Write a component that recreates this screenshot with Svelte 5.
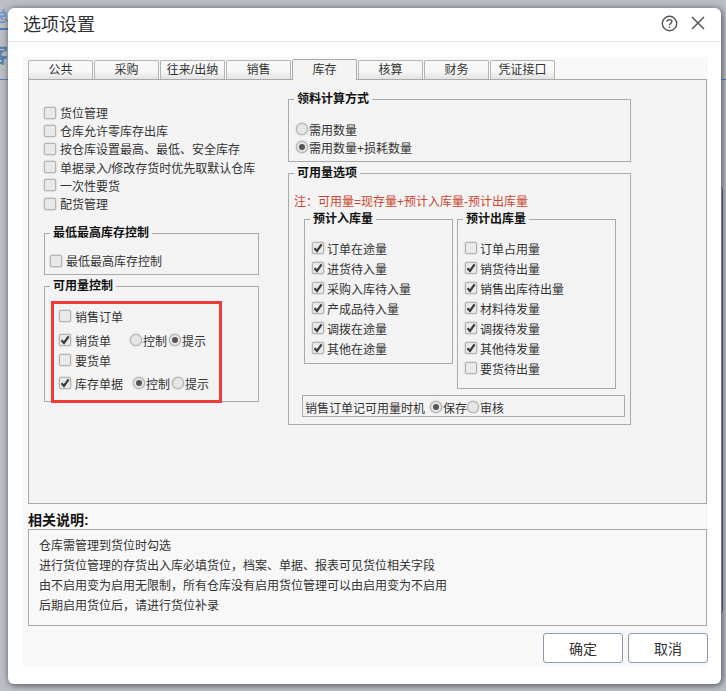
<script>
  const general = [
    { label: '货位管理' },
    { label: '仓库允许零库存出库' },
    { label: '按仓库设置最高、最低、安全库存' },
    { label: '单据录入/修改存货时优先取默认仓库' },
    { label: '一次性要货' },
    { label: '配货管理' }
  ];
  const tabs = ['公共', '采购', '往来/出纳', '销售', '库存', '核算', '财务', '凭证接口'];
  const incoming = ['订单在途量', '进货待入量', '采购入库待入量', '产成品待入量', '调拨在途量', '其他在途量'];
  const outgoing = [
    { label: '订单占用量', on: false },
    { label: '销货待出量', on: true },
    { label: '销售出库待出量', on: true },
    { label: '材料待发量', on: true },
    { label: '调拨待发量', on: true },
    { label: '其他待发量', on: true },
    { label: '要货待出量', on: false }
  ];
  const notes = [
    '仓库需管理到货位时勾选',
    '进行货位管理的存货出入库必填货位，档案、单据、报表可见货位相关字段',
    '由不启用变为启用无限制，所有仓库没有启用货位管理可以由启用变为不启用',
    '后期启用货位后，请进行货位补录'
  ];
</script>

{#snippet check(on)}
  <span class="check">
    {#if on}
      <svg width="10" height="10" viewBox="0 0 10 10"><path d="M1.5 5.2 L4 8 L8.6 1.4" fill="none" stroke="#3a3a3a" stroke-width="2.2" /></svg>
    {/if}
  </span>
{/snippet}

{#snippet radio(on)}
  <span class="radio">{#if on}<span class="dot"></span>{/if}</span>
{/snippet}

<div class="backdrop">
  <span class="bg-glyph one">总</span>
  <span class="bg-line one"></span>
  <span class="bg-glyph two">客</span>
  <span class="bg-line two"></span>
  <span class="bg-line three"></span>
  <span class="bg-curve"></span>

  <div class="dialog">
    <header class="title-bar">
      <h1>选项设置</h1>
      <div class="title-icons">
        <svg width="17" height="17" viewBox="0 0 17 17" fill="none" stroke="#555" stroke-width="1.4">
          <circle cx="8.5" cy="8.5" r="7.2" />
          <path d="M6.1 6.8 C6.1 3.9 10.9 3.9 10.9 6.6 C10.9 8.4 8.5 8.3 8.5 10.3" />
          <path d="M8.5 11.6 V13" />
        </svg>
        <svg width="14" height="14" viewBox="0 0 14 14" fill="none" stroke="#555" stroke-width="1.5">
          <path d="M1 1 L13 13 M13 1 L1 13" />
        </svg>
      </div>
    </header>

    <div class="body">
      <div class="tabs">
        {#each tabs as tab}
          <span class="tab" class:active={tab === '库存'}>{tab}</span>
        {/each}
      </div>

      <div class="panel">
        <div class="col-left">
          <div class="general">
            {#each general as item}
              <label class="row">{@render check(false)}{item.label}</label>
            {/each}
          </div>

          <fieldset class="minmax">
            <legend>最低最高库存控制</legend>
            <label class="row">{@render check(false)}最低最高库存控制</label>
          </fieldset>

          <fieldset class="avail-control">
            <legend>可用量控制</legend>
            <div class="highlight">
              <div class="hl-row r1"><label class="row">{@render check(false)}销售订单</label></div>
              <div class="hl-row r2">
                <label class="row doc">{@render check(true)}销货单</label>
                <span class="choice">{@render radio(false)}控制</span>
                <span class="choice">{@render radio(true)}提示</span>
              </div>
              <div class="hl-row r3"><label class="row">{@render check(false)}要货单</label></div>
              <div class="hl-row r4">
                <label class="row doc tight">{@render check(true)}库存单据</label>
                <span class="choice">{@render radio(true)}控制</span>
                <span class="choice">{@render radio(false)}提示</span>
              </div>
            </div>
          </fieldset>
        </div>

        <div class="col-right">
          <fieldset class="material">
            <legend>领料计算方式</legend>
            <div class="choice line">{@render radio(false)}需用数量</div>
            <div class="choice line">{@render radio(true)}需用数量+损耗数量</div>
          </fieldset>

          <fieldset class="avail-options">
            <legend>可用量选项</legend>
            <p class="formula">注：可用量=现存量+预计入库量-预计出库量</p>
            <div class="qty-groups">
              <fieldset class="qty in">
                <legend>预计入库量</legend>
                {#each incoming as item}
                  <label class="row qty-row">{@render check(true)}{item}</label>
                {/each}
              </fieldset>
              <fieldset class="qty out">
                <legend>预计出库量</legend>
                {#each outgoing as item}
                  <label class="row qty-row">{@render check(item.on)}{item.label}</label>
                {/each}
              </fieldset>
            </div>
            <div class="timing">
              销售订单记可用量时机
              <span class="choice first">{@render radio(true)}保存</span>
              <span class="choice">{@render radio(false)}审核</span>
            </div>
          </fieldset>
        </div>
      </div>

      <div class="notes-title">相关说明:</div>
      <div class="notes">
        {#each notes as line}
          <div>{line}</div>
        {/each}
      </div>

      <div class="actions">
        <button>确定</button>
        <button>取消</button>
      </div>
    </div>
  </div>
</div>

<style>
  :global(body) {
    margin: 0;
    font-family: "Liberation Sans", "Noto Sans CJK SC", sans-serif;
  }

  .backdrop {
    position: relative;
    width: 726px;
    height: 691px;
    overflow: hidden;
    background: #bcbfc6;
    padding: 8px 5px 7px 8px;
    box-sizing: border-box;
  }

  .bg-glyph {
    position: absolute;
    color: #6d95c9;
    font-weight: 700;
  }
  .bg-glyph.one { left: -6px; top: 9px; font-size: 14px; line-height: 14px; }
  .bg-glyph.two { left: -12px; top: 46px; font-size: 20px; line-height: 20px; color: #5b7fb0; }

  .bg-line {
    position: absolute;
    height: 1px;
    background: #4a7fc4;
  }
  .bg-line.one { left: 0; top: 28px; width: 8px; height: 2px; }
  .bg-line.two { left: 0; top: 79px; width: 8px; }
  .bg-line.three { left: 721px; top: 79px; width: 5px; }

  /* edge of the page behind the dialog */
  .bg-curve {
    position: absolute;
    left: 712px;
    top: 185px;
    width: 11px;
    height: 430px;
    box-sizing: border-box;
    border-right: 1px solid #3f68a8;
    border-radius: 0 6px 6px 0;
  }

  .dialog {
    position: relative;
    width: 713px;
    height: 676px;
    box-sizing: border-box;
    background: #fff;
    border-radius: 6px;
    box-shadow: 1px 1px 7px rgba(40, 40, 50, 0.8);
    display: flex;
    flex-direction: column;
  }

  .title-bar {
    height: 34px;
    flex: none;
    box-sizing: border-box;
    border-bottom: 1px solid #e4e4e4;
    display: flex;
    align-items: center;
    justify-content: space-between;
    padding: 0 16px 3px 15px;
  }

  h1 {
    margin: 0;
    font-size: 18px;
    font-weight: 400;
    color: #333;
  }

  .title-icons {
    display: flex;
    align-items: center;
    gap: 13px;
  }

  .body {
    margin: 15px 13px 0 15px;
    height: 610px;
    background: #f8f8f8;
    padding: 3px 0 0 5px;
    box-sizing: border-box;
  }

  .tabs {
    display: flex;
    height: 19px;
    align-items: flex-end;
    margin-right: 2px;
    position: relative;
    z-index: 1;
  }

  .tab {
    width: 65px;
    height: 19px;
    margin-right: 1px;
    box-sizing: border-box;
    border: 1px solid #b4b4b4;
    border-bottom: none;
    border-radius: 2px 2px 0 0;
    background: linear-gradient(#f7f7f7 55%, #e2e2e2);
    font-size: 12px;
    line-height: 18px;
    text-align: center;
    color: #333;
  }

  .tab.active {
    height: 21px;
    margin-bottom: -1px;
    background: #f3f3f3;
    border-color: #aaa;
    line-height: 20px;
  }

  .panel {
    height: 425px;
    width: 679px;
    box-sizing: border-box;
    border: 1px solid #aaa;
    background: #f3f3f3;
    display: flex;
    padding-left: 15px;
  }

  .col-left {
    width: 244px;
    flex: none;
  }

  .col-right {
    padding-top: 12px;
    width: 343px;
  }

  .general {
    padding-top: 23.5px;
    display: flex;
    flex-direction: column;
  }

  .general .row {
    height: 18.2px;
  }

  .row {
    display: flex;
    align-items: center;
    gap: 4px;
    font-size: 12px;
    color: #333;
    white-space: nowrap;
  }

  .check {
    width: 12px;
    height: 12px;
    box-sizing: border-box;
    border: 1px solid #b4b4b4;
    border-radius: 2px;
    background: #e9e9e9;
    box-shadow: 0 0 1.5px #999;
    display: inline-flex;
    align-items: center;
    justify-content: center;
    flex: none;
  }

  .radio {
    width: 12px;
    height: 12px;
    box-sizing: border-box;
    border: 1px solid #b4b4b4;
    border-radius: 50%;
    background: #e6e6e6;
    box-shadow: 0 0 1.5px #999;
    display: inline-flex;
    align-items: center;
    justify-content: center;
    flex: none;
  }

  .dot {
    width: 6px;
    height: 6px;
    border-radius: 50%;
    background: #555;
  }

  fieldset {
    margin: 0;
    border: 1px solid #aaa;
    box-sizing: border-box;
    min-width: 0;
    padding: 0;
  }

  legend {
    font-size: 12px;
    font-weight: 700;
    color: #111;
    padding: 0 3px;
    margin-left: 5px;
    line-height: 14px;
  }

  .minmax {
    margin-top: 13.5px;
    width: 215px;
    height: 49px;
    padding-top: 12px;
  }

  .minmax .row {
    margin-left: 5px;
  }

  .avail-control {
    position: relative;
    margin-top: 4px;
    width: 215px;
    height: 123px;
  }

  /* red annotation box, runs past the fieldset bottom edge */
  .highlight {
    position: absolute;
    left: 6px;
    top: 8px;
    width: 171px;
    height: 102px;
    box-sizing: border-box;
    border: 3px solid #f23a3a;
    padding-left: 5px;
  }

  .hl-row {
    display: flex;
    align-items: center;
    font-size: 12px;
    color: #333;
    height: 18px;
  }
  .r1 { margin-top: 3px; }
  .r2 { margin-top: 6px; }
  .r3 { margin-top: 2px; }
  .r4 { margin-top: 5px; }

  .hl-row .choice + .choice { margin-left: 2px; }

  .doc { width: 71px; flex: none; }
  .doc.tight { width: 74px; }

  .choice {
    display: inline-flex;
    align-items: center;
    gap: 1px;
    font-size: 12px;
    color: #333;
    white-space: nowrap;
  }

  .material {
    width: 343px;
    height: 70px;
    padding-top: 14px;
  }

  .choice.line {
    display: flex;
    height: 18px;
    margin-left: 7px;
  }

  .avail-options {
    margin-top: 4px;
    width: 343px;
    height: 259px;
  }

  .formula {
    margin: 14px 0 0 5px;
    font-size: 12px;
    line-height: 16px;
    color: #c9452f;
  }

  .qty-groups {
    display: flex;
    gap: 4px;
    margin: 2px 0 0 15px;
    align-items: flex-start;
  }

  .qty { padding-top: 12px; }
  .qty.in { width: 149px; height: 152px; }
  .qty.out { width: 159px; height: 177px; }

  .qty-row {
    height: 20px;
    margin-left: 7px;
    gap: 3px;
  }

  .timing {
    margin: 6px 0 0 13px;
    width: 323px;
    height: 22px;
    box-sizing: border-box;
    border: 1px solid #aaa;
    font-size: 12px;
    padding: 2px 0 0 2px;
    color: #333;
    display: flex;
    align-items: center;
    white-space: nowrap;
  }

  .choice.first { margin-left: 5px; }

  .notes-title {
    margin-top: 8px;
    font-size: 14px;
    font-weight: 700;
    line-height: 16px;
    color: #111;
  }

  .notes {
    margin-top: 1px;
    width: 679px;
    height: 97px;
    box-sizing: border-box;
    border: 1px solid #aaa;
    padding: 6px 0 0 10px;
    font-size: 12px;
    line-height: 20px;
    color: #333;
  }

  .actions {
    display: flex;
    justify-content: flex-end;
    gap: 5px;
    margin-top: 7px;
  }

  button {
    width: 80px;
    height: 30px;
    border: 1px solid #8c9bb0;
    border-radius: 3px;
    background: #fff;
    font-family: inherit;
    font-size: 14px;
    color: #333;
    padding: 0;
  }
</style>
